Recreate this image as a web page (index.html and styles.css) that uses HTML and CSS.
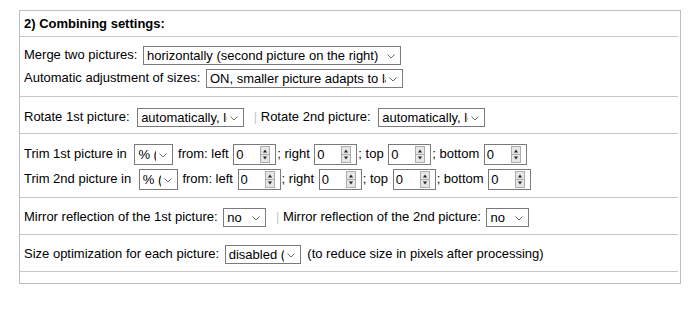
FILE: index.html
```html
<!DOCTYPE html>
<html lang="en">
<head>
    <meta charset="UTF-8">
    <title>Combining settings</title>
    <link rel="stylesheet" href="styles.css">
</head>
<body>
    <div class="panel">
        <div class="head">2) Combining settings:</div>
        <div class="sep"></div>

        <div class="sect s1">
            <div class="row">Merge two pictures: <span class="dd"><select class="w-merge"><option>horizontally (second picture on the right)</option></select><svg viewBox="0 0 8 5"><path d="M.5.5L4 4 7.5.5" fill="none" stroke="#6b6b6b"/></svg></span></div>
            <div class="row">Automatic adjustment of sizes: <span class="dd"><select class="w-auto"><option>ON, smaller picture adapts to larger</option></select><svg viewBox="0 0 8 5"><path d="M.5.5L4 4 7.5.5" fill="none" stroke="#6b6b6b"/></svg></span></div>
        </div>
        <div class="sep"></div>

        <div class="sect s2">
            <div class="row">Rotate 1st picture: <span class="dd"><select class="w-rot"><option>automatically, lossless</option></select><svg viewBox="0 0 8 5"><path d="M.5.5L4 4 7.5.5" fill="none" stroke="#6b6b6b"/></svg></span> <span class="bar">|</span> Rotate 2nd picture: <span class="dd"><select class="w-rot"><option>automatically, lossless</option></select><svg viewBox="0 0 8 5"><path d="M.5.5L4 4 7.5.5" fill="none" stroke="#6b6b6b"/></svg></span></div>
        </div>
        <div class="sep"></div>

        <div class="sect s3">
            <div class="row tall">Trim 1st picture in <span class="dd"><select class="w-unit"><option>% (percent)</option></select><svg viewBox="0 0 8 5"><path d="M.5.5L4 4 7.5.5" fill="none" stroke="#6b6b6b"/></svg></span> from: left <span class="num"><input type="text" value="0"><svg viewBox="0 0 10 17"><rect x=".5" y=".5" width="9" height="16" fill="#e6e6e6" stroke="#adadad"/><path d="M1 8.5H9" stroke="#adadad"/><path d="M3 6.5L5 3.5 7 6.5Z" fill="#222"/><path d="M3 10.5L5 13.5 7 10.5Z" fill="#222"/></svg></span>; right <span class="num"><input type="text" value="0"><svg viewBox="0 0 10 17"><rect x=".5" y=".5" width="9" height="16" fill="#e6e6e6" stroke="#adadad"/><path d="M1 8.5H9" stroke="#adadad"/><path d="M3 6.5L5 3.5 7 6.5Z" fill="#222"/><path d="M3 10.5L5 13.5 7 10.5Z" fill="#222"/></svg></span>; top <span class="num"><input type="text" value="0"><svg viewBox="0 0 10 17"><rect x=".5" y=".5" width="9" height="16" fill="#e6e6e6" stroke="#adadad"/><path d="M1 8.5H9" stroke="#adadad"/><path d="M3 6.5L5 3.5 7 6.5Z" fill="#222"/><path d="M3 10.5L5 13.5 7 10.5Z" fill="#222"/></svg></span>; bottom <span class="num"><input type="text" value="0"><svg viewBox="0 0 10 17"><rect x=".5" y=".5" width="9" height="16" fill="#e6e6e6" stroke="#adadad"/><path d="M1 8.5H9" stroke="#adadad"/><path d="M3 6.5L5 3.5 7 6.5Z" fill="#222"/><path d="M3 10.5L5 13.5 7 10.5Z" fill="#222"/></svg></span></div>
            <div class="row tall">Trim 2nd picture in <span class="dd"><select class="w-unit"><option>% (percent)</option></select><svg viewBox="0 0 8 5"><path d="M.5.5L4 4 7.5.5" fill="none" stroke="#6b6b6b"/></svg></span> from: left <span class="num"><input type="text" value="0"><svg viewBox="0 0 10 17"><rect x=".5" y=".5" width="9" height="16" fill="#e6e6e6" stroke="#adadad"/><path d="M1 8.5H9" stroke="#adadad"/><path d="M3 6.5L5 3.5 7 6.5Z" fill="#222"/><path d="M3 10.5L5 13.5 7 10.5Z" fill="#222"/></svg></span>; right <span class="num"><input type="text" value="0"><svg viewBox="0 0 10 17"><rect x=".5" y=".5" width="9" height="16" fill="#e6e6e6" stroke="#adadad"/><path d="M1 8.5H9" stroke="#adadad"/><path d="M3 6.5L5 3.5 7 6.5Z" fill="#222"/><path d="M3 10.5L5 13.5 7 10.5Z" fill="#222"/></svg></span>; top <span class="num"><input type="text" value="0"><svg viewBox="0 0 10 17"><rect x=".5" y=".5" width="9" height="16" fill="#e6e6e6" stroke="#adadad"/><path d="M1 8.5H9" stroke="#adadad"/><path d="M3 6.5L5 3.5 7 6.5Z" fill="#222"/><path d="M3 10.5L5 13.5 7 10.5Z" fill="#222"/></svg></span>; bottom <span class="num"><input type="text" value="0"><svg viewBox="0 0 10 17"><rect x=".5" y=".5" width="9" height="16" fill="#e6e6e6" stroke="#adadad"/><path d="M1 8.5H9" stroke="#adadad"/><path d="M3 6.5L5 3.5 7 6.5Z" fill="#222"/><path d="M3 10.5L5 13.5 7 10.5Z" fill="#222"/></svg></span></div>
        </div>
        <div class="sep"></div>

        <div class="sect s4">
            <div class="row">Mirror reflection of the 1st picture: <span class="dd"><select class="w-no"><option>no</option></select><svg viewBox="0 0 8 5"><path d="M.5.5L4 4 7.5.5" fill="none" stroke="#6b6b6b"/></svg></span> <span class="bar">|</span> Mirror reflection of the 2nd picture: <span class="dd"><select class="w-no"><option>no</option></select><svg viewBox="0 0 8 5"><path d="M.5.5L4 4 7.5.5" fill="none" stroke="#6b6b6b"/></svg></span></div>
        </div>
        <div class="sep"></div>

        <div class="sect s5">
            <div class="row">Size optimization for each picture: <span class="dd"><select class="w-size"><option>disabled (original size)</option></select><svg viewBox="0 0 8 5"><path d="M.5.5L4 4 7.5.5" fill="none" stroke="#6b6b6b"/></svg></span> (to reduce size in pixels after processing)</div>
        </div>
        <div class="sep"></div>
        <div class="tail"></div>
    </div>
</body>
</html>
```

FILE: styles.css
```css
body {
    margin: 0;
    font-family: "Liberation Sans", Arial, sans-serif;
    font-size: 13px;
    color: #000;
    background: #fff;
}

.panel {
    margin: 10px 0 0 19px;
    width: 662px;
    border: 1px solid #bdbdbd;
    box-sizing: border-box;
}

.head {
    height: 25px;
    line-height: 25px;
    padding-left: 4px;
    font-weight: bold;
}

.sep {
    height: 1px;
    margin-right: 2px;
    background: #c6c6c6;
}

.s1 {
    padding: 6px 0 7px;
}

.s2 {
    padding: 8px 0 5px;
}

.s3 {
    padding: 7px 0 6px;
}

.s4, .s5 {
    padding: 7px 0 6px;
}

.tail {
    height: 11px;
}

.row {
    height: 23px;
    line-height: 23px;
    padding-left: 4px;
    white-space: nowrap;
}

.row.tall {
    height: 25px;
    line-height: 25px;
}

.s2 .dd {
    margin-left: 4px;
}

.s3 .dd {
    margin: 0 1px 0 4px;
}

.s3 .num {
    margin-left: 1px;
}

.bar {
    color: #c4c4c4;
    margin-left: 3px;
}

/* select boxes */
.dd {
    display: inline-block;
    position: relative;
    vertical-align: middle;
    margin: 0 3px 0 2px;
}

.dd select {
    display: block;
    appearance: none;
    -webkit-appearance: none;
    box-sizing: border-box;
    height: 19px;
    border: 1px solid #7a7a7a;
    border-radius: 0;
    padding: 0 16px 0 3px;
    background: #fff;
    color: #000;
    font-family: "Liberation Sans", Arial, sans-serif;
    font-size: 13px;
}

.dd svg {
    position: absolute;
    right: 6px;
    top: 8px;
    width: 8px;
    height: 5px;
    pointer-events: none;
}

.tall .dd select {
    height: 21px;
}

.tall .dd svg {
    top: 9px;
}

.w-merge { width: 258px; }
.w-auto { width: 197px; }
.w-rot { width: 107px; }
.w-unit { width: 39px; }
.w-no { width: 43px; }
.w-size { width: 76px; }

/* number fields with spinner */
.num {
    display: inline-flex;
    align-items: center;
    vertical-align: middle;
    box-sizing: border-box;
    width: 43px;
    height: 21px;
    margin: 0 1px 0 3px;
    border: 1px solid #7a7a7a;
    background: #fff;
}

.num input {
    width: 26px;
    height: 19px;
    box-sizing: border-box;
    border: 0;
    padding: 0 0 0 2px;
    outline: none;
    background: transparent;
    font-family: "Liberation Sans", Arial, sans-serif;
    font-size: 13px;
    color: #000;
}

.num svg {
    width: 10px;
    height: 17px;
}
```
